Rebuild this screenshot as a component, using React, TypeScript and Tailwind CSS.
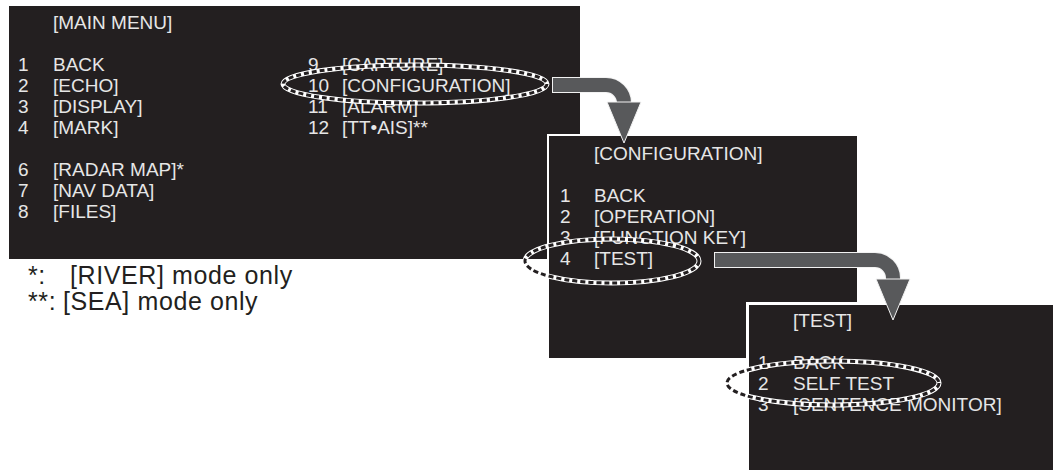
import React from "react";

type Item = [string, string] | null;

function Rows({ items, numW }: { items: Item[]; numW: string }) {
  return (
    <div>
      {items.map((it, i) =>
        it ? (
          <div key={i} className="flex h-[21px] whitespace-nowrap">
            <span className={numW}>{it[0]}</span>
            <span>{it[1]}</span>
          </div>
        ) : (
          <div key={i} className="h-[21px]" />
        )
      )}
    </div>
  );
}

function Chain({ cx, cy, rx, ry }: { cx: number; cy: number; rx: number; ry: number }) {
  return (
    <g fill="none">
      <ellipse cx={cx} cy={cy} rx={rx} ry={ry} stroke="#ffffff" strokeWidth={5} />
      <ellipse cx={cx} cy={cy} rx={rx} ry={ry} stroke="#231f20" strokeWidth={3} strokeDasharray="5 3" />
    </g>
  );
}

function Arrow({ d, outline, head }: { d: string; outline: string; head: string }) {
  return (
    <g>
      <path d={outline} fill="none" stroke="#f2f2f2" strokeWidth={16} />
      <path d={d} fill="none" stroke="#58595b" strokeWidth={14} />
      <polygon points={head} fill="#58595b" stroke="#f2f2f2" strokeWidth={1} />
    </g>
  );
}

export default function App() {
  return (
    <div className="relative w-[1053px] h-[470px] overflow-hidden bg-white font-['Liberation_Sans',Arial,sans-serif]">
      {/* main menu + footnotes */}
      <div className="flex flex-col">
        <div className="ml-[9px] mt-[6px] w-[571px] h-[253px] bg-[#231f20] pl-[9px] pt-[6px] text-[19px] leading-[21px] text-[#e6e6e6]">
          <div className="h-[21px] pl-[35px]">[MAIN MENU]</div>
          <div className="h-[21px]" />
          <div className="flex">
            <div className="w-[290px] shrink-0">
              <Rows
                numW="w-[35px] shrink-0"
                items={[
                  ["1", "BACK"],
                  ["2", "[ECHO]"],
                  ["3", "[DISPLAY]"],
                  ["4", "[MARK]"],
                  null,
                  ["6", "[RADAR MAP]*"],
                  ["7", "[NAV DATA]"],
                  ["8", "[FILES]"],
                ]}
              />
            </div>
            <Rows
              numW="w-[34px] shrink-0"
              items={[
                ["9", "[CAPTURE]"],
                ["10", "[CONFIGURATION]"],
                ["11", "[ALARM]"],
                ["12", "[TT•AIS]**"],
              ]}
            />
          </div>
        </div>
        <div className="mt-[3px] pl-[28px] text-[25px] leading-[26px] tracking-[0.6px] text-[#231f20]">
          <div className="flex whitespace-nowrap">
            <span className="w-[42px] shrink-0">*:</span>
            <span>[RIVER] mode only</span>
          </div>
          <div className="flex whitespace-nowrap">
            <span className="w-[35px] shrink-0">**:</span>
            <span>[SEA] mode only</span>
          </div>
        </div>
      </div>

      {/* configuration */}
      <div className="absolute left-[547px] top-[134px] w-[312px] h-[226px] border-2 border-white bg-[#231f20] pl-[11px] pt-[7px] text-[19px] leading-[21px] text-[#e6e6e6]">
        <div className="h-[21px] pl-[34px]">[CONFIGURATION]</div>
        <div className="h-[21px]" />
        <Rows
          numW="w-[34px] shrink-0"
          items={[
            ["1", "BACK"],
            ["2", "[OPERATION]"],
            ["3", "[FUNCTION KEY]"],
            ["4", "[TEST]"],
          ]}
        />
      </div>

      {/* test */}
      <div className="absolute left-[746px] top-[302px] right-0 bottom-0 border-l-[3px] border-t-[3px] border-white bg-[#231f20] pl-[9px] pt-[5px] text-[19px] leading-[21px] text-[#e6e6e6]">
        <div className="h-[21px] pl-[35px]">[TEST]</div>
        <div className="h-[21px]" />
        <Rows
          numW="w-[35px] shrink-0"
          items={[
            ["1", "BACK"],
            ["2", "SELF TEST"],
            ["3", "[SENTENCE MONITOR]"],
          ]}
        />
      </div>

      {/* arrows and highlight rings */}
      <svg className="absolute inset-0 pointer-events-none" width={1053} height={470} viewBox="0 0 1053 470">
        <Arrow
          outline="M552 85 H606 A18 18 0 0 1 624 103 V104"
          d="M553 85 H606 A18 18 0 0 1 624 103 V104"
          head="607,102 641,102 624,143"
        />
        <Arrow
          outline="M714 260 H875 A18 18 0 0 1 893 278 V280"
          d="M715 260 H875 A18 18 0 0 1 893 278 V280"
          head="876,279 910,279 893,320"
        />
        <Chain cx={415} cy={84} rx={132} ry={19} />
        <Chain cx={612} cy={261} rx={87} ry={22} />
        <Chain cx={833} cy={383} rx={106} ry={22} />
      </svg>
    </div>
  );
}
